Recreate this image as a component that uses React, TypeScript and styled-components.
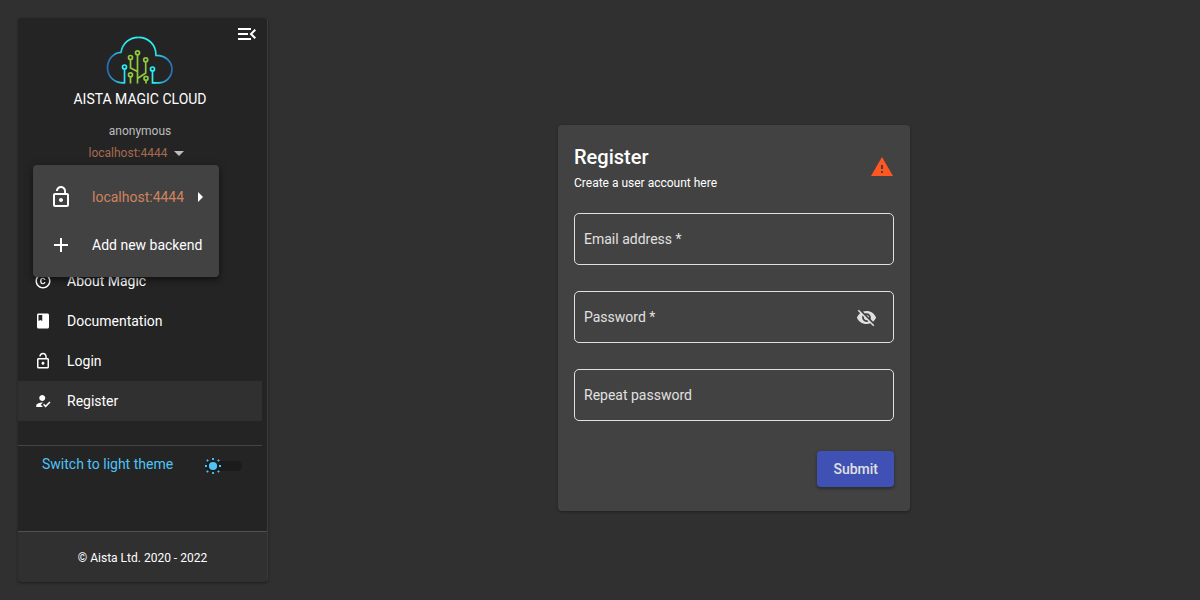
import React, { useState } from "react";
import styled, { createGlobalStyle } from "styled-components";
import {
  MdAdd,
  MdArrowDropDown,
  MdBook,
  MdCopyright,
  MdHowToReg,
  MdLockOpen,
  MdMenuOpen,
  MdVisibilityOff,
  MdWarning,
} from "react-icons/md";

const GlobalStyle = createGlobalStyle`
  *, *::before, *::after { box-sizing: border-box; }
  body {
    margin: 0;
    background: #303030;
    color: #fff;
    font: 400 14px/20px Roboto, "Liberation Sans", sans-serif;
  }
  button, input { font: inherit; color: inherit; }
  button { cursor: pointer; }
`;

const Page = styled.div`
  display: flex;
  min-height: 100vh;
  padding: 18px 0 18px 18px;
`;

const Sidebar = styled.aside`
  display: flex;
  flex-direction: column;
  flex: 0 0 250px;
  background: #242424;
  border-right: 1px solid #3c3c3c;
  border-radius: 4px;
  box-shadow: 0 1px 3px rgba(0, 0, 0, 0.4);
`;

const SidebarBody = styled.div`
  display: flex;
  flex-direction: column;
  flex: 1;
  margin-right: 5px;
`;

const Brand = styled.header`
  display: grid;
  grid-template-columns: 30px 1fr 30px;
  justify-items: center;
  padding-top: 4px;
`;

const IconButton = styled.button`
  display: grid;
  place-items: center;
  padding: 0;
  border: 0;
  background: none;
`;

const CollapseButton = styled(IconButton)`
  grid-column: 3;
  grid-row: 1;
  width: 24px;
  height: 24px;
  font-size: 24px;
`;

const Logo = styled.svg`
  grid-column: 2;
  grid-row: 1;
  width: 68px;
  height: 50px;
  margin-top: 14px;
`;

const BrandName = styled.div`
  grid-column: 1 / -1;
  margin-top: 3px;
`;

const Account = styled.div`
  display: flex;
  flex-direction: column;
  align-items: center;
  margin-top: 14px;
  font-size: 12px;
  line-height: 16px;
  color: #bdbdbd;
`;

const BackendPicker = styled.div`
  position: relative;
  align-self: stretch;
  display: flex;
  justify-content: center;
  margin-top: 4px;
`;

const BackendTrigger = styled.button`
  display: flex;
  align-items: center;
  height: 20px;
  padding: 0;
  border: 0;
  background: none;
  color: #a56b50;
  line-height: 20px;

  svg {
    width: 24px;
    height: 24px;
    color: #bdbdbd;
  }
`;

const Menu = styled.div`
  position: absolute;
  z-index: 2;
  top: 22px;
  left: 15px;
  display: flex;
  flex-direction: column;
  width: 186px;
  padding: 8px 0;
  border-radius: 4px;
  background: #424242;
  box-shadow: 0 2px 4px -1px rgba(0, 0, 0, 0.3), 0 4px 5px rgba(0, 0, 0, 0.2),
    0 1px 10px rgba(0, 0, 0, 0.2);
`;

const MenuItem = styled.button<{ $accent?: boolean }>`
  display: flex;
  align-items: center;
  height: 48px;
  padding: 0 16px;
  border: 0;
  background: none;
  font-size: 14px;
  white-space: nowrap;
  color: ${(p) => (p.$accent ? "#d0835f" : "#fff")};

  > svg:first-child {
    width: 24px;
    height: 24px;
    margin-right: 19px;
    color: #fff;
  }
`;

const SubmenuArrow = styled.svg`
  width: 5px;
  height: 10px;
  margin-left: auto;
  fill: #fff;
`;

const Nav = styled.nav`
  display: flex;
  flex-direction: column;
  margin-top: 98px;
`;

const NavLink = styled.a<{ $active?: boolean }>`
  display: flex;
  align-items: center;
  gap: 15px;
  height: 40px;
  padding: 0 16px;
  color: #fff;
  text-decoration: none;
  background: ${(p) => (p.$active ? "#303030" : "transparent")};

  svg {
    width: 18px;
    height: 18px;
  }
`;

const ThemeRow = styled.label`
  display: flex;
  align-items: center;
  justify-content: space-between;
  margin-top: 24px;
  padding: 8px 20px 8px 24px;
  border-top: 1px solid #444;
  color: #4fc3f7;
`;

const Toggle = styled.span`
  position: relative;
  display: flex;
  width: 36px;
  margin-top: 4px;
`;

const ToggleThumb = styled.svg`
  position: absolute;
  top: -4px;
  left: -2px;
  width: 18px;
  height: 18px;
`;

const ToggleInput = styled.input`
  appearance: none;
  width: 36px;
  height: 10px;
  margin: 0;
  border-radius: 5px;
  background: #1b1b1b;
`;

const SidebarFooter = styled.footer`
  padding: 16px 16px 14px;
  border-top: 1px solid #505050;
  border-radius: 0 0 4px 4px;
  background: #303030;
  font-size: 12px;
  text-align: center;
`;

const Main = styled.main`
  display: flex;
  flex: 1;
  align-items: center;
  justify-content: center;
  padding-top: 36px;
`;

const Card = styled.form`
  width: 352px;
  padding: 16px 16px 24px;
  border-radius: 4px;
  background: #424242;
  box-shadow: 0 1px 3px rgba(0, 0, 0, 0.35);
`;

const CardHeader = styled.div`
  display: flex;
  align-items: center;
  justify-content: space-between;
  margin-bottom: 20px;

  > svg {
    width: 24px;
    height: 24px;
    color: #ff5722;
  }
`;

const Title = styled.h1`
  margin: 0;
  font-size: 20px;
  font-weight: 500;
  line-height: 32px;
`;

const Subtitle = styled.p`
  margin: 0;
  font-size: 12px;
`;

const Fields = styled.div`
  display: grid;
  gap: 26px;
`;

const FieldBox = styled.div`
  display: grid;
  grid-template-columns: 1fr auto;
  align-items: center;
  height: 52px;
  border: 1px solid #e0e0e0;
  border-radius: 5px;
`;

const FieldLabel = styled.label`
  grid-area: 1 / 1;
  padding-left: 9px;
  color: #e0e0e0;
  pointer-events: none;
`;

const FieldInput = styled.input`
  grid-area: 1 / 1 / 2 / 3;
  width: 100%;
  height: 50px;
  padding: 0 9px;
  border: 0;
  outline: 0;
  background: none;

  &:not(:placeholder-shown) + label {
    visibility: hidden;
  }
`;

const RevealButton = styled(IconButton)`
  grid-area: 1 / 2;
  width: 40px;
  height: 40px;
  margin-right: 7px;
  font-size: 21px;
  color: #e0e0e0;
`;

const Actions = styled.div`
  display: flex;
  justify-content: flex-end;
  margin-top: 30px;
`;

const SubmitButton = styled.button`
  height: 36px;
  padding: 0 16px;
  border: 0;
  border-radius: 4px;
  background: #3f51b5;
  color: #e0e0e0;
  font-weight: 500;
  box-shadow: 0 2px 2px rgba(0, 0, 0, 0.2), 0 1px 4px rgba(0, 0, 0, 0.2);
`;

function CloudLogo() {
  return (
    <Logo viewBox="0 0 68 50" fill="none" strokeWidth="1.7" role="img" aria-label="Aista">
      <defs>
        <linearGradient id="cloudLeft" x1="1" y1="0" x2="20" y2="0" gradientUnits="userSpaceOnUse">
          <stop offset="0" stopColor="#2868b4" />
          <stop offset="1" stopColor="#2af0f5" />
        </linearGradient>
        <linearGradient id="cloudRight" x1="48" y1="0" x2="67" y2="0" gradientUnits="userSpaceOnUse">
          <stop offset="0" stopColor="#2af0f5" />
          <stop offset="1" stopColor="#2868b4" />
        </linearGradient>
      </defs>
      <path stroke="url(#cloudLeft)" d="M18.500 33V46.800C8.500 47.300 1.500 40.800 1.500 31.800C1.500 23.300 7.500 16.600 15 16.300C16.500 7.300 23.500 1.300 32.500 1.300" />
      <path stroke="url(#cloudRight)" d="M32.500 1.300C42.500 1.300 50 8.800 50 19.300C59.500 19.300 66 25.300 66 33.300C66 41.300 59.500 46.800 52.500 46.800H46.500V35" />
      <g stroke="#2af0f5">
        <circle cx="18.500" cy="31" r="2" />
        <circle cx="46.500" cy="33" r="2" />
      </g>
      <g stroke="#8fcb3c">
        <path d="M31.500 19V47.500M24.500 23.800V32L31.500 35.500M39.700 26V37L31.500 42.500M24.500 41V47.500M40 44.500V47.500" />
        <circle cx="31.500" cy="16.800" r="2" />
        <circle cx="24.500" cy="21.500" r="2" />
        <circle cx="39.700" cy="23.800" r="2" />
        <circle cx="24.500" cy="38.800" r="2" />
        <circle cx="40" cy="42.300" r="2" />
      </g>
    </Logo>
  );
}

function SunThumb() {
  return (
    <ToggleThumb viewBox="0 0 18 18" aria-hidden="true">
      <circle cx="9" cy="9" r="4.100" fill="currentColor" />
      <path
        stroke="currentColor"
        strokeWidth="1.800"
        d="M9 1V3M9 15V17M1 9H3M15 9H17M2.800 2.800L4.200 4.200M13.800 13.800L15.200 15.200M2.800 15.200L4.200 13.800M13.800 4.200L15.200 2.800"
      />
    </ToggleThumb>
  );
}

interface FieldProps {
  id: string;
  label: string;
  type: string;
  children?: React.ReactNode;
}

function Field({ id, label, type, children }: FieldProps) {
  return (
    <FieldBox>
      <FieldInput id={id} type={type} placeholder=" " />
      <FieldLabel htmlFor={id}>{label}</FieldLabel>
      {children}
    </FieldBox>
  );
}

const links = [
  { label: "About Magic", icon: <MdCopyright /> },
  { label: "Documentation", icon: <MdBook /> },
  { label: "Login", icon: <MdLockOpen /> },
  { label: "Register", icon: <MdHowToReg />, active: true },
];

export default function App() {
  const [menuOpen, setMenuOpen] = useState(true);
  const [revealed, setRevealed] = useState(false);

  return (
    <>
      <GlobalStyle />
      <Page>
        <Sidebar>
          <SidebarBody>
            <Brand>
              <CloudLogo />
              <CollapseButton type="button" aria-label="Collapse menu">
                <MdMenuOpen />
              </CollapseButton>
              <BrandName>AISTA MAGIC CLOUD</BrandName>
            </Brand>
            <Account>
              <span>anonymous</span>
              <BackendPicker>
                <BackendTrigger
                  type="button"
                  aria-haspopup="menu"
                  aria-expanded={menuOpen}
                  onClick={() => setMenuOpen(!menuOpen)}
                >
                  localhost:4444
                  <MdArrowDropDown />
                </BackendTrigger>
                {menuOpen && (
                  <Menu role="menu">
                    <MenuItem type="button" role="menuitem" $accent>
                      <MdLockOpen />
                      localhost:4444
                      <SubmenuArrow viewBox="0 0 5 10" aria-hidden="true">
                        <path d="M0 0l5 5-5 5z" />
                      </SubmenuArrow>
                    </MenuItem>
                    <MenuItem type="button" role="menuitem">
                      <MdAdd />
                      Add new backend
                    </MenuItem>
                  </Menu>
                )}
              </BackendPicker>
            </Account>
            <Nav>
              {links.map((link) => (
                <NavLink key={link.label} href="#" $active={link.active}>
                  {link.icon}
                  {link.label}
                </NavLink>
              ))}
            </Nav>
            <ThemeRow>
              Switch to light theme
              <Toggle>
                <ToggleInput type="checkbox" role="switch" />
                <SunThumb />
              </Toggle>
            </ThemeRow>
          </SidebarBody>
          <SidebarFooter>© Aista Ltd. 2020 - 2022</SidebarFooter>
        </Sidebar>
        <Main>
          <Card onSubmit={(e) => e.preventDefault()}>
            <CardHeader>
              <div>
                <Title>Register</Title>
                <Subtitle>Create a user account here</Subtitle>
              </div>
              <MdWarning />
            </CardHeader>
            <Fields>
              <Field id="email" label="Email address *" type="email" />
              <Field id="password" label="Password *" type={revealed ? "text" : "password"}>
                <RevealButton
                  type="button"
                  aria-label="Show password"
                  onClick={() => setRevealed(!revealed)}
                >
                  <MdVisibilityOff />
                </RevealButton>
              </Field>
              <Field id="repeat" label="Repeat password" type="password" />
            </Fields>
            <Actions>
              <SubmitButton type="submit">Submit</SubmitButton>
            </Actions>
          </Card>
        </Main>
      </Page>
    </>
  );
}
